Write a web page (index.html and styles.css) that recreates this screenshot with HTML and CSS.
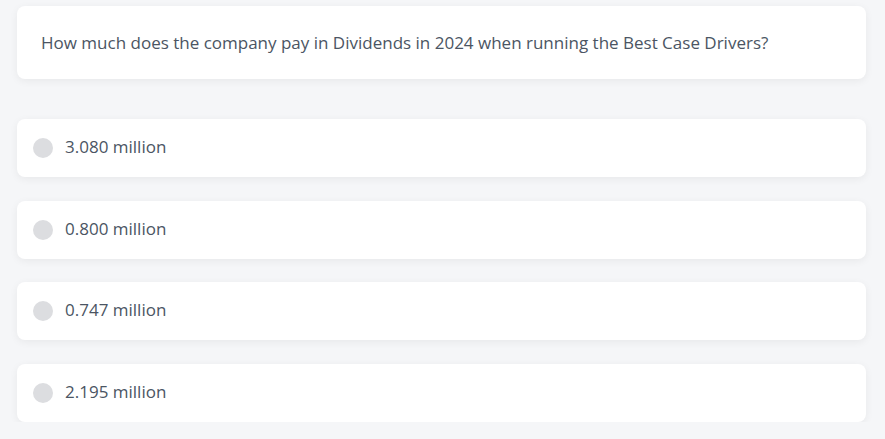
FILE: index.html
```html
<!DOCTYPE html>
<html>
<head>
<meta charset="utf-8">
<link rel="stylesheet" href="styles.css">
</head>
<body>
<div class="quiz">
  <div class="question">How much does the company pay in Dividends in 2024 when running the Best Case Drivers?</div>
  <div class="options">
    <div class="option"><span class="radio"></span><span class="label">3.080 million</span></div>
    <div class="option"><span class="radio"></span><span class="label">0.800 million</span></div>
    <div class="option"><span class="radio"></span><span class="label">0.747 million</span></div>
    <div class="option"><span class="radio"></span><span class="label">2.195 million</span></div>
  </div>
</div>
</body>
</html>
```
FILE: styles.css
```css
html, body {
  margin: 0;
  background: #f5f6f8;
}
body {
  font-family: "Open Sans", "Noto Sans", sans-serif;
  color: #4b5563;
}
.quiz {
  width: 849px;
  padding: 6px 0 0 17px;
}
.question {
  background: #fff;
  border-radius: 8px;
  box-shadow: 0 2px 8px rgba(0,0,0,0.06);
  height: 73px;
  box-sizing: border-box;
  padding: 0 24px 1px;
  display: flex;
  align-items: center;
  font-size: 17px;
}
.options {
  margin-top: 40px;
  display: flex;
  flex-direction: column;
  gap: 23.7px;
}
.option {
  background: #fff;
  border-radius: 8px;
  box-shadow: 0 2px 8px rgba(0,0,0,0.06);
  height: 58px;
  box-sizing: border-box;
  padding: 0 16px;
  display: flex;
  align-items: center;
  gap: 12px;
  font-size: 17px;
}
.radio {
  width: 20px;
  height: 20px;
  border-radius: 50%;
  background: #dcdde0;
  flex: none;
}
.label {
  padding-bottom: 3px;
}
```
